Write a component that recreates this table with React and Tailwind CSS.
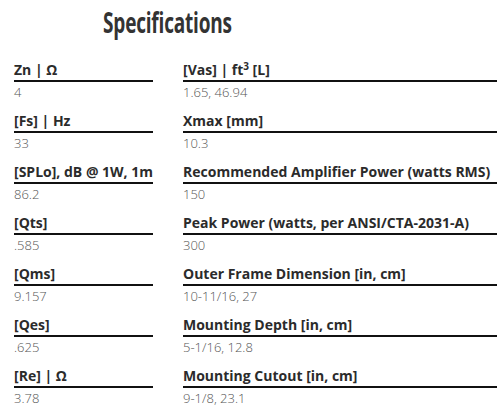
import React from "react";

const left = [
  { label: "Zn | Ω", value: "4" },
  { label: "[Fs] | Hz", value: "33" },
  { label: "[SPLo], dB @ 1W, 1m", value: "86.2" },
  { label: "[Qts]", value: ".585" },
  { label: "[Qms]", value: "9.157" },
  { label: "[Qes]", value: ".625" },
  { label: "[Re] | Ω", value: "3.78" },
];

const right = [
  {
    label: (
      <>
        [Vas] | ft<span className="relative -top-[5px] text-[10px] leading-none">3</span> [L]
      </>
    ),
    value: "1.65, 46.94",
  },
  { label: "Xmax [mm]", value: "10.3" },
  { label: "Recommended Amplifier Power (watts RMS)", value: "150" },
  { label: "Peak Power (watts, per ANSI/CTA-2031-A)", value: "300" },
  { label: "Outer Frame Dimension [in, cm]", value: "10-11/16, 27" },
  { label: "Mounting Depth [in, cm]", value: "5-1/16, 12.8" },
  { label: "Mounting Cutout [in, cm]", value: "9-1/8, 23.1" },
];

const SpecRow = ({ label, value }) => (
  <div className="h-[51px]">
    <div className="text-[14px] leading-[18px] font-bold text-[#2b2b2b] pb-px border-b-2 border-[#111] whitespace-nowrap">
      {label}
    </div>
    <div className="mt-px text-[13px] leading-[18px] font-light text-[#555]">
      {value}
    </div>
  </div>
);

export default function App() {
  return (
    <div
      className="w-[500px] h-[416px] bg-white overflow-hidden"
      style={{ fontFamily: '"Open Sans", "Liberation Sans", sans-serif' }}
    >
      {/* Heading */}
      <h2 className="pt-[8px] pl-[103px] h-[61px]">
        <span className="inline-block origin-left scale-x-[0.68] text-[28px] leading-[28px] font-bold text-[#333] whitespace-nowrap tracking-[-0.3px]">
          Specifications
        </span>
      </h2>

      <div className="flex pl-[14px] pr-[3px] gap-[30px]">
        <div className="w-[139px]">
          {left.map((r, i) => (
            <SpecRow key={i} {...r} />
          ))}
        </div>
        <div className="flex-1">
          {right.map((r, i) => (
            <SpecRow key={i} {...r} />
          ))}
        </div>
      </div>
    </div>
  );
}
